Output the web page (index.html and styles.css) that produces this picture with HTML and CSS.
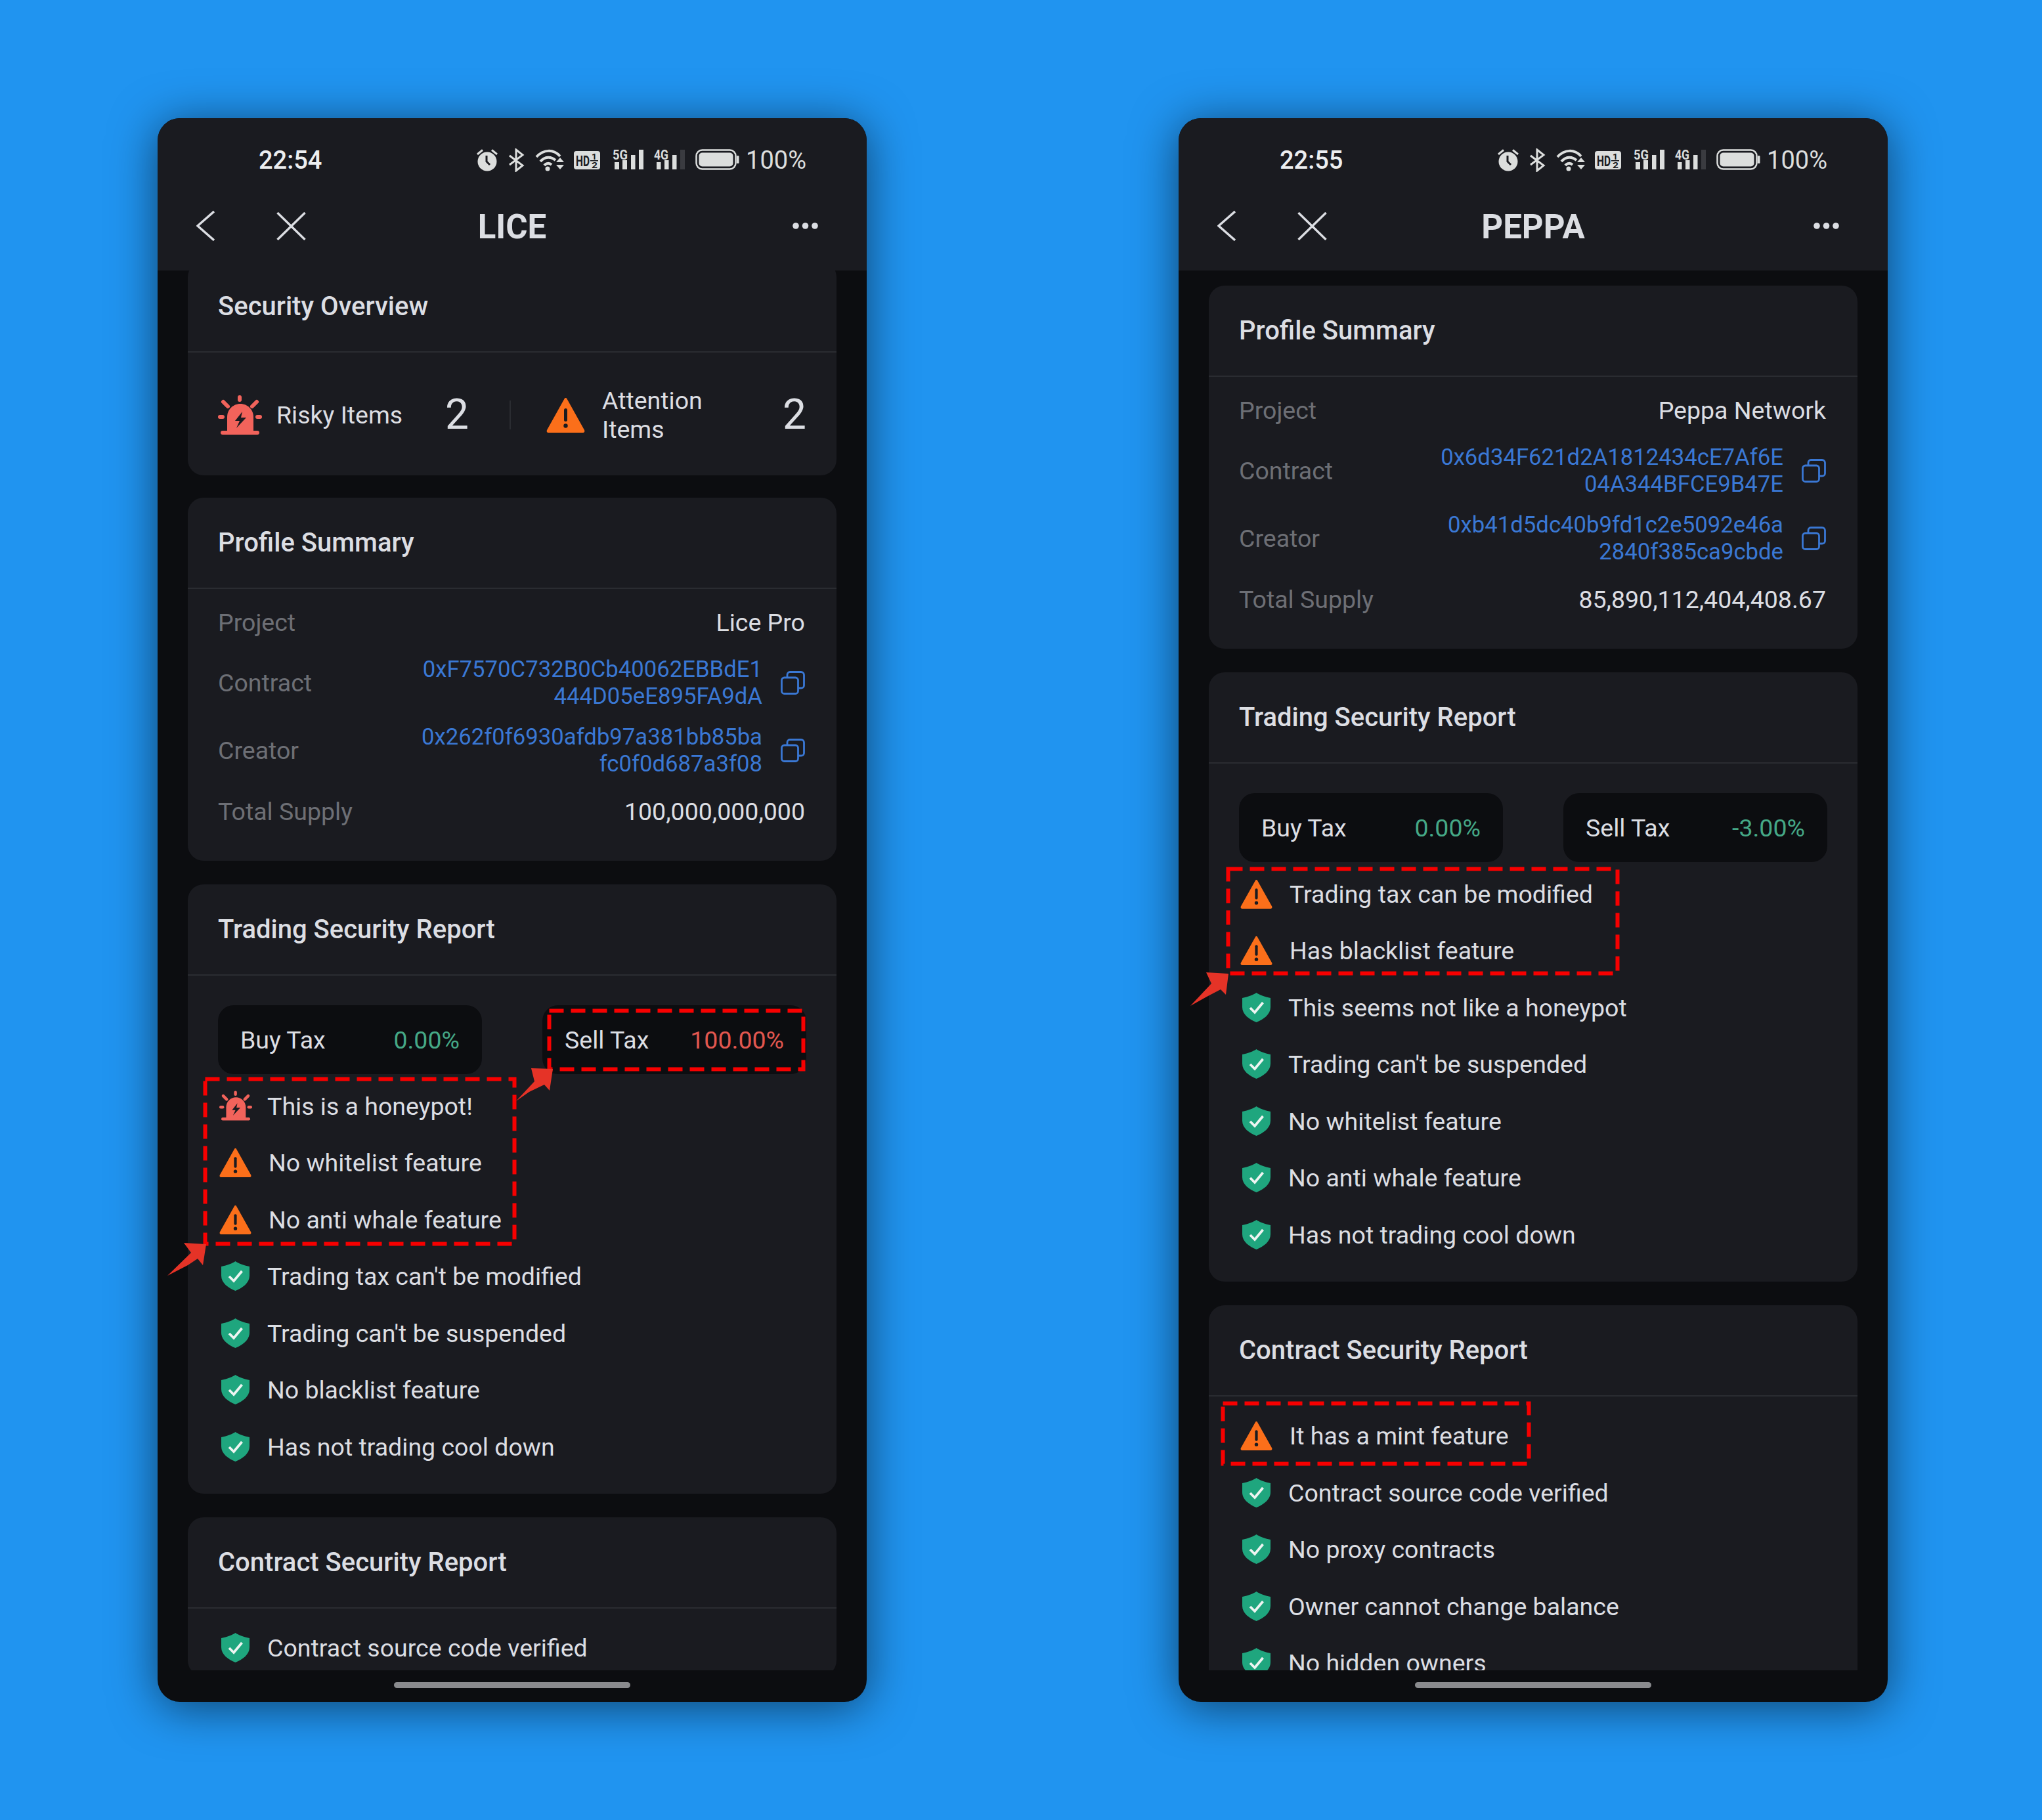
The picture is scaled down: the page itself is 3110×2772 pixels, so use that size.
FILE: index.html
```html
<!DOCTYPE html>
<html lang="en">
<head>
<meta charset="utf-8">
<title>Security reports</title>
<link rel="stylesheet" href="styles.css">
</head>
<body>
<svg class="defs" width="0" height="0" aria-hidden="true">
  <defs>
    <symbol id="i-shield" viewBox="0 0 43 45">
      <path d="M21.5 0 C26 3 34 6.500 43 8 V22 C43 33 32 41 21.500 45 C11 41 0 33 0 22 V8 C9 6.500 17 3 21.500 0Z" fill="#1fa67e"/>
      <path d="M12 23 L19 30 L31.500 15" fill="none" stroke="#eef5f2" stroke-width="3.800"/>
    </symbol>
    <symbol id="i-warn" viewBox="0 0 59 54">
      <path d="M29.500 1 C30.500 1 31 1.500 31.500 2.500 L58 50 C59 52 58 54 56 54 H3 C1 54 0 52 1 50 L27.500 2.500 C28 1.500 28.500 1 29.500 1Z" fill="#fb6f1a"/>
      <rect x="27" y="17" width="5" height="20" rx="2.500" fill="#1a1b20"/>
      <circle cx="29.500" cy="43.500" r="3.200" fill="#1a1b20"/>
    </symbol>
    <symbol id="i-alarm" viewBox="0 0 67 60">
      <g fill="#f2635b">
        <path d="M14 55 V33 C14 22 23 13 34 13 C45 13 54 22 54 33 V55Z"/>
        <rect x="4" y="54" width="59" height="6" rx="3"/>
        <rect x="30" y="0" width="6" height="10" rx="3"/>
        <rect x="0" y="30" width="10" height="6" rx="3"/>
        <rect x="57" y="30" width="10" height="6" rx="3"/>
      </g>
      <path d="M8 10 L15 17 M59 10 L52 17" stroke="#f2635b" stroke-width="6" stroke-linecap="round"/>
      <path d="M37 25 L26 39 H33 L28 50 L43 34 H35Z" fill="#1a1b20"/>
    </symbol>
    <symbol id="i-copy" viewBox="0 0 37 36">
      <g fill="none" stroke="#3a78d4" stroke-width="2.800">
        <rect x="1.500" y="10" width="25" height="24.500" rx="4"/>
        <path d="M10 10 V6 C10 3.500 11.500 1.500 14 1.500 H31 C33.500 1.500 35.500 3.500 35.500 6 V22 C35.500 24.500 33.500 26 31 26 H26.500"/>
      </g>
    </symbol>
    <symbol id="i-status" viewBox="0 0 400 36">
      <g fill="#dcdedd">
        <circle cx="16" cy="20" r="14.500"/>
        <path d="M1 9 L9 2.500 M31 9 L23 2.500" stroke="#dcdedd" stroke-width="3" fill="none"/>
        <path d="M15 11 V20 L20 25" stroke="#1a1b20" stroke-width="3" fill="none"/>
        <path d="M50 11 L70 26 L60 34 V2 L70 10 L50 25" stroke="#dcdedd" stroke-width="3" fill="none"/>
        <path d="M91 13 C102 1 117 1 127 12 M97 20 C104 12 113 12 120 18 M103 26 C106 22 111 22 114 25" stroke="#dcdedd" stroke-width="4" fill="none"/>
        <circle cx="108" cy="31" r="3.500"/>
        <path d="M127 14 L133 21 H121Z M121 25 H133 L127 32Z"/>
        <rect x="148" y="4" width="40" height="28" rx="4"/>
        <text x="151" y="27" class="st-hd" textLength="21" lengthAdjust="spacingAndGlyphs">HD</text>
        <text x="175" y="17" class="st-frac" textLength="8" lengthAdjust="spacingAndGlyphs">1</text>
        <rect x="173" y="18" width="12" height="1.500" fill="#1a1b20"/>
        <text x="175" y="30" class="st-frac" textLength="9" lengthAdjust="spacingAndGlyphs">2</text>
        <text x="207" y="17" class="st-net" textLength="23" lengthAdjust="spacingAndGlyphs">5G</text>
        <rect x="210" y="21" width="7" height="11"/><rect x="222" y="18" width="7" height="14"/><rect x="235" y="10" width="6.500" height="22"/><rect x="247" y="2" width="7" height="30"/>
        <text x="270" y="17" class="st-net" textLength="22" lengthAdjust="spacingAndGlyphs">4G</text>
        <rect x="274" y="21" width="6.500" height="11"/><rect x="286" y="18" width="6.500" height="14"/><rect x="298" y="10" width="6.500" height="22"/><rect x="310" y="2" width="7" height="30" fill="#3a3b40"/>
        <rect x="334.500" y="2.500" width="60" height="29" rx="9" fill="none" stroke="#dcdedd" stroke-width="2.500"/>
        <rect x="338.500" y="6.500" width="52" height="21" rx="5"/>
        <rect x="396" y="11" width="3.500" height="12" rx="1.500"/>
      </g>
    </symbol>
    <symbol id="i-back" viewBox="0 0 28 46"><path d="M27 1 L2 23 L27 45" fill="none" stroke="#dcdee3" stroke-width="3.400"/></symbol>
    <symbol id="i-close" viewBox="0 0 45 43"><path d="M1.500 1 L43.500 42 M43.500 1 L1.500 42" fill="none" stroke="#dcdee3" stroke-width="3.400"/></symbol>
    <symbol id="i-more" viewBox="0 0 39 10"><g fill="#dcdee3"><circle cx="5" cy="5" r="4.800"/><circle cx="19.500" cy="5" r="4.800"/><circle cx="34" cy="5" r="4.800"/></g></symbol>
  </defs>
</svg>

<main class="phone">
  <header class="top">
    <div class="status">
      <span class="time">22:54</span>
      <div class="status-right">
        <svg class="status-icons"><use href="#i-status"/></svg>
        <span class="batt">100%</span>
      </div>
    </div>
    <nav class="nav">
      <div class="nav-left">
        <svg class="ic-back"><use href="#i-back"/></svg>
        <svg class="ic-close"><use href="#i-close"/></svg>
      </div>
      <h1 class="title">LICE</h1>
      <div class="nav-right"><svg class="ic-more"><use href="#i-more"/></svg></div>
    </nav>
  </header>
  <div class="scroll">
    <section class="card overview">
      <h2 class="card-head">Security Overview</h2>
      <div class="over-body">
        <div class="over-half over-risk">
          <svg class="ic-alarm-lg"><use href="#i-alarm"/></svg>
          <span class="over-label">Risky Items</span>
          <span class="over-num">2</span>
        </div>
        <div class="over-half over-att">
          <svg class="ic-warn-lg"><use href="#i-warn"/></svg>
          <span class="over-label over-wrap">Attention<br>Items</span>
          <span class="over-num">2</span>
        </div>
      </div>
    </section>
    <section class="card">
      <h2 class="card-head">Profile Summary</h2>
      <div class="profile">
        <div class="row row-single"><span class="label">Project</span><span class="value">Lice Pro</span></div>
        <div class="row"><span class="label">Contract</span><div class="addr"><span>0xF7570C732B0Cb40062EBBdE1<br>444D05eE895FA9dA</span><svg class="ic-copy"><use href="#i-copy"/></svg></div></div>
        <div class="row"><span class="label">Creator</span><div class="addr"><span>0x262f0f6930afdb97a381bb85ba<br>fc0f0d687a3f08</span><svg class="ic-copy"><use href="#i-copy"/></svg></div></div>
        <div class="row row-single"><span class="label">Total Supply</span><span class="value">100,000,000,000</span></div>
      </div>
    </section>
    <section class="card">
      <h2 class="card-head">Trading Security Report</h2>
      <div class="trading">
        <div class="taxes">
          <div class="tax"><span>Buy Tax</span><span class="good">0.00%</span></div>
          <div class="tax"><span>Sell Tax</span><span class="bad">100.00%</span></div>
        </div>
        <ul class="items">
          <li class="item"><svg class="ic ic-alarm"><use href="#i-alarm"/></svg>This is a honeypot!</li>
          <li class="item"><svg class="ic ic-warn"><use href="#i-warn"/></svg>No whitelist feature</li>
          <li class="item"><svg class="ic ic-warn"><use href="#i-warn"/></svg>No anti whale feature</li>
          <li class="item"><svg class="ic ic-shield"><use href="#i-shield"/></svg>Trading tax can't be modified</li>
          <li class="item"><svg class="ic ic-shield"><use href="#i-shield"/></svg>Trading can't be suspended</li>
          <li class="item"><svg class="ic ic-shield"><use href="#i-shield"/></svg>No blacklist feature</li>
          <li class="item"><svg class="ic ic-shield"><use href="#i-shield"/></svg>Has not trading cool down</li>
        </ul>
      </div>
    </section>
    <section class="card">
      <h2 class="card-head">Contract Security Report</h2>
      <ul class="items items-contract">
        <li class="item"><svg class="ic ic-shield"><use href="#i-shield"/></svg>Contract source code verified</li>
      </ul>
    </section>
  </div>
  <footer class="home"><span class="home-bar"></span></footer>
  <svg class="marks" viewBox="0 0 1080 2412" aria-hidden="true">
    <rect class="dash" x="72.500" y="1463.500" width="471" height="251"/>
    <rect class="dash" x="596.500" y="1359.500" width="387" height="89"/>
    <path class="arrow" d="M15 1763 L51 1728 L40 1713 L74 1715 L69 1747 L61 1737 L46 1747Z"/>
    <path class="arrow" d="M546 1497 L574 1467 L569 1447 L602 1448 L597 1481 L589 1472 L566 1483Z"/>
  </svg>
</main>

<main class="phone">
  <header class="top">
    <div class="status">
      <span class="time">22:55</span>
      <div class="status-right">
        <svg class="status-icons"><use href="#i-status"/></svg>
        <span class="batt">100%</span>
      </div>
    </div>
    <nav class="nav">
      <div class="nav-left">
        <svg class="ic-back"><use href="#i-back"/></svg>
        <svg class="ic-close"><use href="#i-close"/></svg>
      </div>
      <h1 class="title">PEPPA</h1>
      <div class="nav-right"><svg class="ic-more"><use href="#i-more"/></svg></div>
    </nav>
  </header>
  <div class="scroll scroll-top">
    <section class="card">
      <h2 class="card-head">Profile Summary</h2>
      <div class="profile">
        <div class="row row-single"><span class="label">Project</span><span class="value">Peppa Network</span></div>
        <div class="row"><span class="label">Contract</span><div class="addr"><span>0x6d34F621d2A1812434cE7Af6E<br>04A344BFCE9B47E</span><svg class="ic-copy"><use href="#i-copy"/></svg></div></div>
        <div class="row"><span class="label">Creator</span><div class="addr"><span>0xb41d5dc40b9fd1c2e5092e46a<br>2840f385ca9cbde</span><svg class="ic-copy"><use href="#i-copy"/></svg></div></div>
        <div class="row row-single"><span class="label">Total Supply</span><span class="value">85,890,112,404,408.67</span></div>
      </div>
    </section>
    <section class="card">
      <h2 class="card-head">Trading Security Report</h2>
      <div class="trading">
        <div class="taxes">
          <div class="tax"><span>Buy Tax</span><span class="good">0.00%</span></div>
          <div class="tax"><span>Sell Tax</span><span class="good">-3.00%</span></div>
        </div>
        <ul class="items">
          <li class="item"><svg class="ic ic-warn"><use href="#i-warn"/></svg>Trading tax can be modified</li>
          <li class="item"><svg class="ic ic-warn"><use href="#i-warn"/></svg>Has blacklist feature</li>
          <li class="item"><svg class="ic ic-shield"><use href="#i-shield"/></svg>This seems not like a honeypot</li>
          <li class="item"><svg class="ic ic-shield"><use href="#i-shield"/></svg>Trading can't be suspended</li>
          <li class="item"><svg class="ic ic-shield"><use href="#i-shield"/></svg>No whitelist feature</li>
          <li class="item"><svg class="ic ic-shield"><use href="#i-shield"/></svg>No anti whale feature</li>
          <li class="item"><svg class="ic ic-shield"><use href="#i-shield"/></svg>Has not trading cool down</li>
        </ul>
      </div>
    </section>
    <section class="card">
      <h2 class="card-head">Contract Security Report</h2>
      <ul class="items items-contract">
        <li class="item"><svg class="ic ic-warn"><use href="#i-warn"/></svg>It has a mint feature</li>
        <li class="item"><svg class="ic ic-shield"><use href="#i-shield"/></svg>Contract source code verified</li>
        <li class="item"><svg class="ic ic-shield"><use href="#i-shield"/></svg>No proxy contracts</li>
        <li class="item"><svg class="ic ic-shield"><use href="#i-shield"/></svg>Owner cannot change balance</li>
        <li class="item"><svg class="ic ic-shield"><use href="#i-shield"/></svg>No hidden owners</li>
      </ul>
    </section>
  </div>
  <footer class="home"><span class="home-bar"></span></footer>
  <svg class="marks" viewBox="0 0 1080 2412" aria-hidden="true">
    <rect class="dash" x="75.500" y="1143.500" width="593" height="159"/>
    <rect class="dash" x="67.500" y="1957.500" width="466" height="92"/>
    <path class="arrow" d="M18 1352 L50 1318 L42 1301 L76 1303 L72 1335 L64 1327 L43 1338Z"/>
  </svg>
</main>
</body>
</html>
```

FILE: styles.css
```css
* { box-sizing: border-box; }

html, body { margin: 0; padding: 0; }

body {
  width: 3110px;
  height: 2772px;
  padding: 180px 235px 0 240px;
  display: flex;
  gap: 475px;
  align-items: flex-start;
  overflow: hidden;
  background: #2094f0;
  font-family: Roboto, "Liberation Sans", sans-serif;
  color: #dcdee3;
}

.defs { position: absolute; }

.phone {
  position: relative;
  width: 1080px;
  height: 2412px;
  flex: none;
  display: flex;
  flex-direction: column;
  border-radius: 34px;
  background: #0c0d10;
  box-shadow: 0 8px 70px rgba(0, 0, 0, .55);
}

.top {
  height: 232px;
  flex: none;
  background: #1a1b20;
  border-radius: 34px 34px 0 0;
}

.status {
  height: 128px;
  padding: 0 92px 0 154px;
  display: flex;
  align-items: center;
  justify-content: space-between;
  font-size: 38px;
}

.time { font-weight: 500; color: #eceef0; }

.status-right { display: flex; align-items: center; gap: 10px; }

.status-icons { width: 400px; height: 36px; display: block; }

.st-hd { font: 700 22px Roboto, sans-serif; fill: #1a1b20; }
.st-frac { font: 700 12px Roboto, sans-serif; fill: #1a1b20; }
.st-net { font: 700 20px Roboto, sans-serif; }

.batt { color: #dcdedd; }

.nav {
  height: 76px;
  padding: 0 74px;
  display: grid;
  grid-template-columns: 1fr auto 1fr;
  align-items: center;
}

.nav-left { display: flex; align-items: center; gap: 94px; margin: 0 0 4px -15px; }

.ic-back { width: 28px; height: 46px; display: block; }
.ic-close { width: 45px; height: 43px; display: block; }
.ic-more { width: 39px; height: 10px; display: block; }

.nav-right { display: flex; justify-content: flex-end; margin-bottom: 4px; }

.title {
  margin: 0;
  font-size: 51px;
  font-weight: 700;
  line-height: 76px;
}

.scroll {
  flex: 1;
  min-height: 0;
  padding: 0 46px;
  overflow: hidden;
}

.scroll-top { padding-top: 23px; }

.card {
  background: #1a1b20;
  border-radius: 24px;
  margin-bottom: 36px;
}

.overview { margin-top: -14px; margin-bottom: 34px; }

.card-head {
  margin: 0;
  height: 139px;
  padding: 0 46px;
  display: flex;
  align-items: center;
  border-bottom: 2px solid #2a2c31;
  font-size: 40px;
  font-weight: 500;
  color: #dcdee3;
}

.over-body {
  height: 187px;
  padding: 2px 46px 0;
  display: flex;
  align-items: center;
}

.over-half { display: flex; align-items: center; font-size: 37.500px; }

.over-risk {
  width: 446px;
  height: 44px;
  padding-right: 62px;
  border-right: 2px solid #2a2c31;
}

.over-att { flex: 1; padding-left: 54px; }

.ic-alarm-lg { width: 67px; height: 60px; flex: none; margin-right: 22px; }
.ic-warn-lg { width: 59px; height: 54px; flex: none; margin-right: 26px; }

.over-wrap { line-height: 44px; }

.over-num { margin-left: auto; font-size: 64px; line-height: 44px; }

.profile {
  padding: 20px 48px 45px 46px;
  display: flex;
  flex-direction: column;
  gap: 21px;
}

.row {
  height: 82px;
  display: flex;
  align-items: center;
  justify-content: space-between;
  font-size: 37.500px;
}

.row-single { height: 61px; }

.label { color: #6d6f75; }

.value { color: #dcdee3; }

.addr {
  display: flex;
  align-items: center;
  gap: 28px;
  text-align: right;
  color: #3a78d4;
  font-size: 34.700px;
  line-height: 41px;
}

.ic-copy { width: 37px; height: 36px; flex: none; }

.trading { padding: 45px 0 28px; }

.taxes {
  padding: 0 46px;
  display: flex;
  justify-content: space-between;
  margin-bottom: 5px;
}

.tax {
  width: 402px;
  height: 105px;
  padding: 0 34px;
  display: flex;
  align-items: center;
  justify-content: space-between;
  background: #0c0d10;
  border-radius: 24px;
  font-size: 37.500px;
}

.good { color: #45a886; }
.bad { color: #e2574f; }

.items {
  margin: 0;
  padding: 0 0 0 48px;
  list-style: none;
}

.items-contract { padding-top: 17px; }

.item {
  height: 86.500px;
  padding-top: 1px;
  display: flex;
  align-items: center;
  font-size: 37.500px;
  color: #dcdee3;
}

.ic { flex: none; display: block; }

.ic-shield { width: 43px; height: 45px; margin: -1px 27px 0 3px; }
.ic-warn { width: 49px; height: 45px; margin: -1px 26px 0 0; }
.ic-alarm { width: 50px; height: 46px; margin: -1px 23px 0 0; }

.home {
  height: 48px;
  flex: none;
  padding-top: 18px;
  display: flex;
  justify-content: center;
}

.home-bar {
  width: 360px;
  height: 9px;
  border-radius: 5px;
  background: #8a8b8e;
}

.marks {
  position: absolute;
  left: 0;
  top: 0;
  width: 1080px;
  height: 2412px;
  pointer-events: none;
}

.dash {
  fill: none;
  stroke: #f70000;
  stroke-width: 6;
  stroke-dasharray: 22 11;
}

.arrow { fill: #e53327; }
```
